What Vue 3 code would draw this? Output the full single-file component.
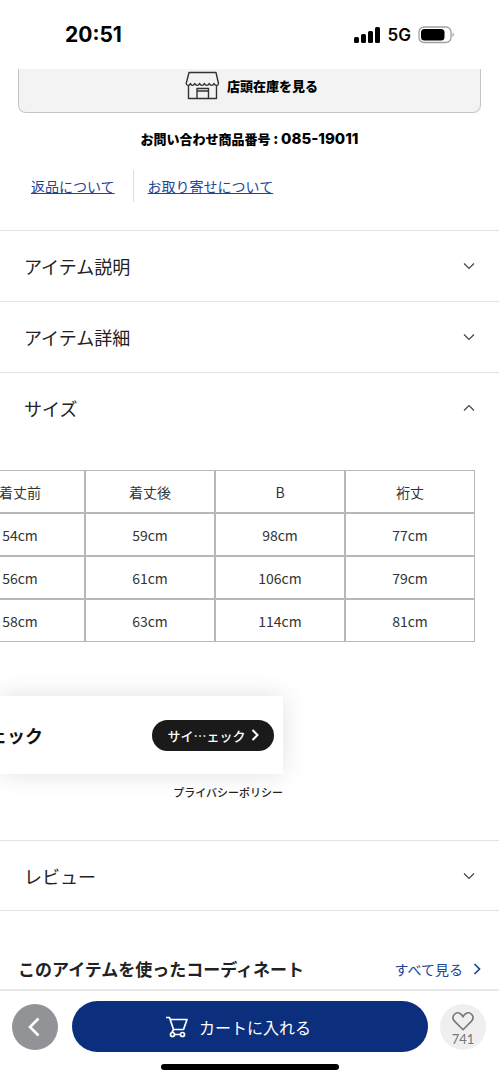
<script setup>
const topSections = [
  { title: 'アイテム説明', open: false },
  { title: 'アイテム詳細', open: false },
  { title: 'サイズ', open: true },
]
const columns = ['着丈前', '着丈後', 'B', '裄丈']
const rows = [
  ['54cm', '59cm', '98cm', '77cm'],
  ['56cm', '61cm', '106cm', '79cm'],
  ['58cm', '63cm', '114cm', '81cm'],
]
</script>

<template>
  <div class="page">
    <header class="status">
      <span class="time">20:51</span>
      <div class="signals">
        <svg width="27" height="16" viewBox="0 0 27 16" aria-hidden="true">
          <rect x="0" y="10" width="5" height="6" rx="1.5" />
          <rect x="7" y="7" width="5" height="9" rx="1.5" />
          <rect x="14" y="4" width="5" height="12" rx="1.5" />
          <rect x="21" y="0" width="5" height="16" rx="1.5" />
        </svg>
        <span class="network">5G</span>
        <svg width="37" height="18" viewBox="0 0 37 18" aria-hidden="true">
          <rect x="1" y="1" width="32" height="15.5" rx="5" fill="none" stroke="#a0a0a0" stroke-width="1.3" />
          <rect x="3" y="3" width="23.5" height="11.5" rx="3.5" />
          <path d="M34.5 6.5c1.8.8 1.8 3.7 0 4.5z" fill="#999" />
        </svg>
      </div>
    </header>

    <main>
      <button class="store" type="button">
        <svg width="35" height="29" viewBox="0 0 35 29" fill="none" stroke="#333" stroke-width="1.4" stroke-linejoin="round" aria-hidden="true">
          <path d="M4 1.500H31L33.500 12.500C33.300 15 30 15 29 12.500C28 15 25.300 15 24.200 12.500C23.100 15 20.500 15 19.400 12.500C18.300 15 15.700 15 14.600 12.500C13.500 15 10.900 15 9.800 12.500C8.700 15 6.100 15 5.500 12.500C4.500 15 1.500 15 1.200 12.500Z" />
          <path d="M3.500 14.500V27.500H31.500V14.500M12 27.500V17.500H23.500V27.500M12 20H23.500" />
        </svg>
        <span>店頭在庫を見る</span>
      </button>
      <p class="code">お問い合わせ商品番号 : <span>085-19011</span></p>
      <nav class="links">
        <a href="#returns">返品について</a>
        <a href="#orders">お取り寄せについて</a>
      </nav>

      <section v-for="s in topSections" :key="s.title" class="section">
        <button class="toggle" type="button" :aria-expanded="s.open">
          <span>{{ s.title }}</span>
          <svg width="12" height="8" viewBox="0 0 12 8" class="chevron" aria-hidden="true">
            <path :d="s.open ? 'M1 6.500L6 1.500L11 6.500' : 'M1 1.500L6 6.500L11 1.500'" />
          </svg>
        </button>
      </section>

      <div class="scroller">
        <table>
          <thead>
            <tr><th v-for="c in columns" :key="c" scope="col">{{ c }}</th></tr>
          </thead>
          <tbody>
            <tr v-for="r in rows" :key="r[0]"><td v-for="v in r" :key="v">{{ v }}</td></tr>
          </tbody>
        </table>
      </div>

      <div class="checker">
        <div class="card">
          <div class="card-title"><span>ェック</span></div>
          <button class="pill" type="button">
            <span>サイ…ェック</span>
            <svg width="8" height="12" viewBox="0 0 8 12" fill="none" stroke="#fff" stroke-width="2" aria-hidden="true"><path d="M1.500 1L6.500 6L1.500 11" /></svg>
          </button>
        </div>
        <a class="privacy" href="#privacy">プライバシーポリシー</a>
      </div>

      <section class="section review">
        <button class="toggle" type="button" aria-expanded="false">
          <span>レビュー</span>
          <svg width="12" height="8" viewBox="0 0 12 8" class="chevron" aria-hidden="true"><path d="M1 1.500L6 6.500L11 1.500" /></svg>
        </button>
      </section>

      <div class="coordinate">
        <h2>このアイテムを使ったコーディネート</h2>
        <a href="#coordinate">
          <span>すべて見る</span>
          <svg width="8" height="12" viewBox="0 0 8 12" fill="none" stroke="#1d4598" stroke-width="1.7" aria-hidden="true"><path d="M1.500 1L6.500 6L1.500 11" /></svg>
        </a>
      </div>
    </main>

    <footer>
      <div class="actions">
        <button class="round back" type="button" aria-label="戻る">
          <svg width="12" height="20" viewBox="0 0 12 20" fill="none" stroke="#fff" stroke-width="2.6" aria-hidden="true"><path d="M10.500 1.500L2 10L10.500 18.500" /></svg>
        </button>
        <button class="cart" type="button">
          <svg width="24" height="22" viewBox="0 0 24 22" fill="none" stroke="#fff" stroke-width="1.7" stroke-linejoin="round" aria-hidden="true">
            <path d="M1 1.500H4.500L8.500 13.500H18.500L22 3.500H5.500M8.500 13.500L7 16.500M9.500 18.500H15.500" />
            <circle cx="7.500" cy="18.500" r="2" />
            <circle cx="17.500" cy="18.500" r="2" />
          </svg>
          <span>カートに入れる</span>
        </button>
        <button class="round like" type="button">
          <svg width="22" height="19" viewBox="0 0 22 19" fill="none" stroke="#777" stroke-width="1.6" stroke-linejoin="round" aria-hidden="true">
            <path d="M11 17.700L2.700 9.400C-1.800 4.500 4 -1.500 8.700 2C9.800 2.800 10.500 3.700 11 4.800C11.500 3.700 12.200 2.800 13.300 2C18 -1.500 23.800 4.500 19.300 9.400Z" />
          </svg>
          <span>741</span>
        </button>
      </div>
      <div class="home"></div>
    </footer>
  </div>
</template>

<style>
body { margin: 0; background: #fff; }
</style>

<style scoped>
.page {
  font-family: "Noto Sans CJK JP", sans-serif;
  color: #222;
  overflow: hidden;
}
button {
  font: inherit;
  color: inherit;
  border: 0;
  padding: 0;
  margin: 0;
  background: none;
}
svg { display: block; flex: none; }
.status {
  box-sizing: border-box;
  height: 69px;
  padding: 0 44px 0 65px;
  display: flex;
  align-items: center;
  justify-content: space-between;
  font-family: Inter, sans-serif;
  color: #000;
}
.time { font-size: 21px; font-weight: 700; }
.signals { display: flex; align-items: center; gap: 7px; }
.network { font-size: 17px; font-weight: 600; }
.store {
  display: flex;
  align-items: center;
  justify-content: center;
  gap: 7px;
  box-sizing: border-box;
  width: calc(100% - 36px);
  height: 44px;
  margin: 0 18px;
  padding: 0 0 11px 4px;
  border: 1px solid #c4c4c4;
  border-top: 0;
  border-radius: 0 0 8px 8px;
  background: #f3f3f3;
  color: #000;
  font-size: 13px;
  font-weight: 900;
}
.code {
  margin: 16px 0 0;
  line-height: 20px;
  text-align: center;
  font-size: 13px;
  font-weight: 900;
  color: #000;
}
.code span {
  font-family: Inter, sans-serif;
  font-size: 15px;
  font-weight: 800;
  line-height: 1;
}
.links {
  display: flex;
  margin: 21px 0 28px 31px;
  line-height: 32px;
  font-size: 14px;
}
.links a { color: #1d4598; }
.links a + a {
  margin-left: 18px;
  padding-left: 14px;
  border-left: 1px solid #ddd;
}
.section { border-top: 1px solid #e2e2e2; }
.toggle {
  display: flex;
  align-items: center;
  justify-content: space-between;
  width: 100%;
  height: 70px;
  padding: 0 24px;
  font-size: 18px;
}
.chevron { fill: none; stroke: #444; stroke-width: 1.2; }
.scroller {
  display: flex;
  justify-content: flex-end;
  margin-top: 27px;
  padding-right: 24px;
  overflow: hidden;
}
table {
  flex: none;
  width: 520px;
  table-layout: fixed;
  border-spacing: 0;
  border: 0;
  font-size: 14px;
  color: #333;
}
th, td {
  box-sizing: border-box;
  height: 43px;
  padding: 0;
  border: 1px solid #b8b8b8;
  text-align: center;
  font-weight: 400;
}
.checker {
  width: 283px;
  margin-top: 54px;
  display: flex;
  flex-direction: column;
}
.card {
  display: flex;
  align-items: center;
  justify-content: space-between;
  height: 78px;
  padding-right: 9px;
  background: #fff;
  box-shadow: 0 0 24px rgba(0, 0, 0, 0.12);
}
.card-title {
  display: flex;
  justify-content: flex-end;
  width: 43px;
  overflow: hidden;
  white-space: nowrap;
  font-size: 18px;
  font-weight: 700;
  color: #111;
}
.pill {
  display: flex;
  align-items: center;
  justify-content: center;
  gap: 5px;
  width: 122px;
  height: 31px;
  border-radius: 16px;
  background: #1a1a1a;
  color: #fff;
  font-size: 13px;
  font-weight: 500;
}
.privacy {
  align-self: flex-end;
  margin-top: 8px;
  line-height: 20px;
  font-size: 11px;
  font-weight: 500;
  color: #222;
  text-decoration: none;
}
.review { margin-top: 38px; border-bottom: 1px solid #e2e2e2; }
.review .toggle { height: 69px; }
.coordinate {
  display: flex;
  align-items: center;
  justify-content: space-between;
  margin-top: 45px;
  padding: 0 18px 7px;
  line-height: 26px;
}
h2 { margin: 0; font-size: 17px; font-weight: 700; }
.coordinate a {
  display: flex;
  align-items: center;
  gap: 10px;
  font-size: 14px;
  color: #1d4598;
  text-decoration: none;
}
footer { border-top: 2px solid #e8e8e8; background: #fff; }
.actions {
  display: flex;
  align-items: center;
  padding: 10px 13px 0 12px;
}
.round { flex: none; width: 46px; height: 46px; border-radius: 50%; }
.back {
  display: flex;
  align-items: center;
  justify-content: center;
  padding-right: 2px;
  background: #929396;
}
.cart {
  flex: 1;
  display: flex;
  align-items: center;
  justify-content: center;
  gap: 10px;
  height: 51px;
  margin: 0 12px 0 14px;
  padding-right: 24px;
  border-radius: 26px;
  background: #0b2f7d;
  color: #fff;
  font-size: 16px;
}
.like {
  display: flex;
  flex-direction: column;
  align-items: center;
  padding-top: 8px;
  background: #efefef;
  color: #777;
  font-family: Lato, sans-serif;
  font-size: 13px;
  line-height: 16px;
}
.home {
  width: 178px;
  height: 6px;
  margin: 12px auto 10px;
  border-radius: 3px;
  background: #000;
}
</style>
